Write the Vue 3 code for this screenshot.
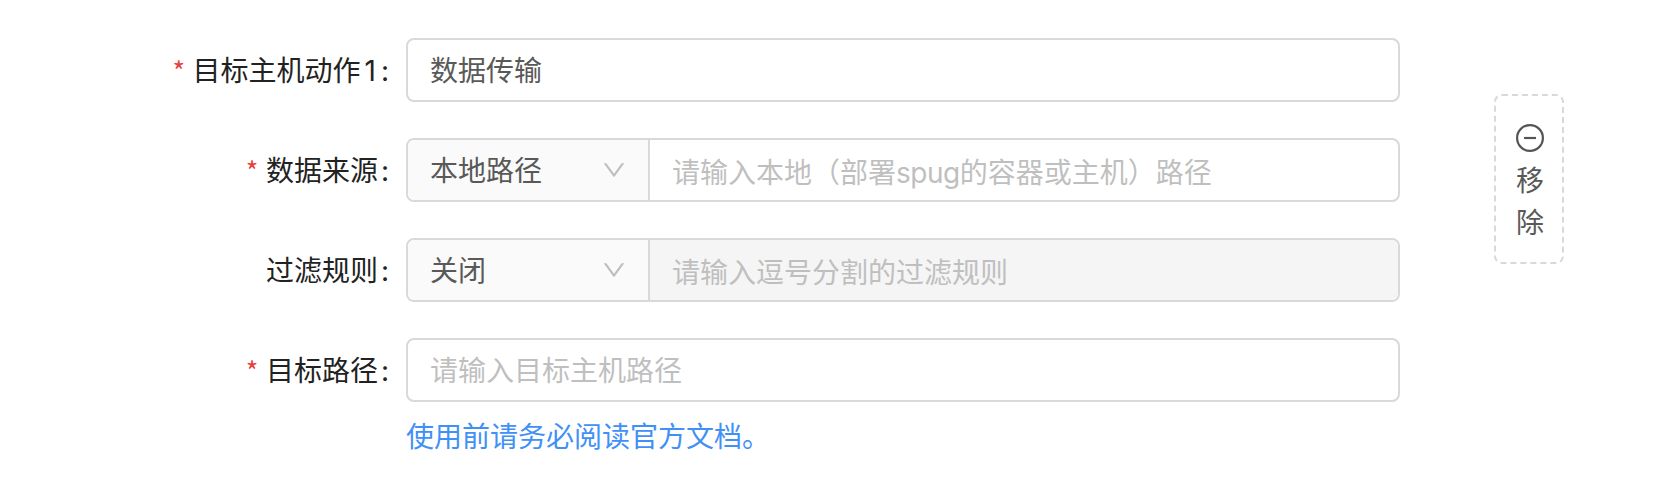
<script setup>
const rows = [
  { label: '目标主机动作1', required: true, value: '数据传输' },
  { label: '数据来源', required: true, select: '本地路径', placeholder: '请输入本地（部署spug的容器或主机）路径' },
  { label: '过滤规则', required: false, select: '关闭', placeholder: '请输入逗号分割的过滤规则', disabled: true },
  { label: '目标路径', required: true, placeholder: '请输入目标主机路径' },
]
// Separates Latin words and digits so they can be spaced independently of the Chinese text.
const parts = (text) => text.split(/([a-z]+|\d+)/).filter(Boolean)
</script>

<template>
  <main class="page">
    <form class="form">
      <div v-for="row in rows" :key="row.label" class="row">
        <div class="label"><span v-if="row.required" class="star">*</span><span v-for="part in parts(row.label)" :key="part" :class="{ digit: /^\d/.test(part) }">{{ part }}</span><span class="colon">:</span></div>
        <div class="control">
          <div v-if="row.select" class="select">
            <span>{{ row.select }}</span>
            <svg class="arrow" viewBox="64 64 896 896"><path d="M884 256h-75c-5.1 0-9.9 2.5-12.9 6.6L512 654.2 227.9 262.6c-3-4.1-7.8-6.6-12.9-6.6h-75c-6.5 0-10.3 7.4-6.5 12.7l352.6 486.1c12.8 17.6 39 17.6 51.7 0l352.6-486.1c3.9-5.3.1-12.7-6.4-12.7z" /></svg>
          </div>
          <div class="input" :class="{ disabled: row.disabled, grouped: row.select, placeholder: !row.value }"><span v-for="part in parts(row.value || row.placeholder)" :key="part" :class="{ latin: /^[a-z]/.test(part) }">{{ part }}</span></div>
        </div>
      </div>
      <a class="help">使用前请务必阅读官方文档。</a>
    </form>
    <div class="remove">
      <svg class="minus" viewBox="0 0 28 28"><circle cx="14" cy="14" r="12.9" /><path d="M8 14h12" /></svg>
      <span>移</span>
      <span>除</span>
    </div>
  </main>
</template>

<style scoped>
.page { box-sizing: border-box; width: 1668px; height: 498px; padding-top: 38px; background: #fff; display: flex; align-items: flex-start; font: 28px/42px Inter, "Noto Sans CJK SC", sans-serif; color: #222; overflow: hidden; }
.form { width: 1400px; flex: none; }
.row { display: flex; height: 64px; margin-bottom: 36px; }
.label { width: 406px; display: flex; justify-content: flex-end; align-items: center; box-sizing: border-box; padding: 2px 17px 0 0; white-space: nowrap; }
.star { color: #e8403c; font: 27px/42px "Noto Sans CJK SC", sans-serif; margin: -1px 7.5px 0 0; }
.digit { margin: 0 2px 0 4px; }
.colon { margin-left: 3px; }
.control { width: 994px; box-sizing: border-box; border: 2px solid #d9d9d9; border-radius: 8px; display: flex; overflow: hidden; color: #595959; }
.select { width: 242px; box-sizing: border-box; padding: 0 22px; display: flex; align-items: center; justify-content: space-between; background: #fafafa; border-right: 2px solid #d9d9d9; }
.select span { padding-top: 2px; }
.arrow { width: 24px; height: 24px; fill: #bfbfbf; }
.input { flex: 1; padding: 2px 0 0 22px; display: flex; align-items: center; }
.latin { letter-spacing: -0.5px; }
.placeholder { color: #bfbfbf; }
.grouped { padding-top: 6px; }
.disabled { background: #f5f5f5; }
.help { display: block; margin: -22px 0 0 406px; color: #4090f7; }
.remove { box-sizing: border-box; width: 70px; height: 170px; margin: 56px 0 0 94px; border: 2px dashed #d9d9d9; border-radius: 8px; display: flex; flex-direction: column; align-items: center; padding: 28px 0 0 2px; color: #595959; }
.minus { width: 28px; height: 28px; margin-bottom: 8px; fill: none; stroke: #555; stroke-width: 2.2; }
</style>
